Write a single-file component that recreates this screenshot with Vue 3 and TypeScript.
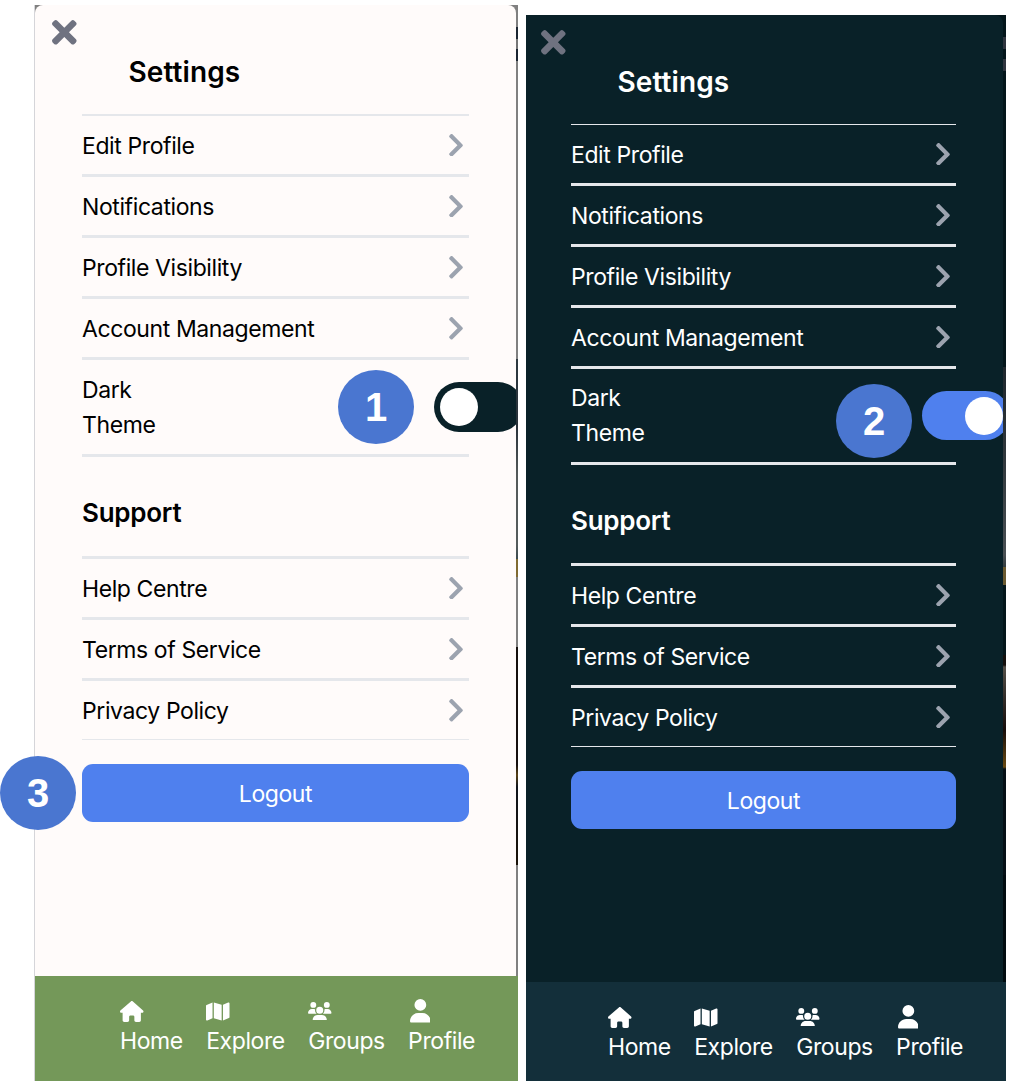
<script setup lang="ts">
interface Screen {
  theme: 'light' | 'dark'
  dark: boolean
}

interface NavItem {
  label: string
  box: string
  path: string
  w: number
  h: number
}

const screens: Screen[] = [
  { theme: 'light', dark: false },
  { theme: 'dark', dark: true },
]

const settings: string[] = ['Edit Profile', 'Notifications', 'Profile Visibility', 'Account Management']
const support: string[] = ['Help Centre', 'Terms of Service', 'Privacy Policy']

const closePath =
  'M242.72 256l100.07-100.07c12.28-12.28 12.28-32.19 0-44.48l-22.24-22.24c-12.28-12.28-32.19-12.28-44.48 0L176 189.28 75.93 89.21c-12.28-12.28-32.19-12.28-44.48 0L9.21 111.45c-12.28 12.28-12.28 32.19 0 44.48L109.28 256 9.21 356.07c-12.28 12.28-12.28 32.19 0 44.48l22.24 22.24c12.28 12.28 32.2 12.28 44.48 0L176 322.72l100.07 100.07c12.28 12.28 32.2 12.28 44.48 0l22.24-22.24c12.28-12.28 12.28-32.19 0-44.48L242.72 256z'
const chevronPath =
  'M285.476 272.971L91.132 467.314c-9.373 9.373-24.569 9.373-33.941 0l-22.667-22.667c-9.357-9.357-9.375-24.522-.04-33.901L188.505 256 34.484 101.255c-9.335-9.379-9.317-24.544.04-33.901l22.667-22.667c9.373-9.373 24.569-9.373 33.941 0L285.475 239.03c9.373 9.372 9.373 24.568.001 33.941z'

const nav: NavItem[] = [
  {
    label: 'Home',
    box: '0 0 576 512',
    w: 23.5,
    h: 21,
    path: 'M575.8 255.5c0 18-15 32.1-32 32.1h-32l.7 160.2c0 2.7-.2 5.4-.5 8.1V472c0 22.1-17.9 40-40 40H456c-1.1 0-2.2 0-3.3-.1c-1.4 .1-2.8 .1-4.2 .1H416 392c-22.1 0-40-17.9-40-40V448 384c0-17.7-14.3-32-32-32H256c-17.7 0-32 14.3-32 32v64 24c0 22.1-17.9 40-40 40H160 128.1c-1.5 0-3-.1-4.5-.2c-1.2 .1-2.4 .2-3.6 .2H104c-22.1 0-40-17.9-40-40V360c0-.9 0-1.9 .1-2.8V287.6H32c-18 0-32-14-32-32.1c0-9 3-17 10-24L266.4 8c7-7 15-8 22-8s15 2 21 7L564.8 231.5c8 7 12 15 11 24z',
  },
  {
    label: 'Explore',
    box: '0 0 576 512',
    w: 23.5,
    h: 21,
    path: 'M384 476.1L192 421.2V35.9L384 90.8V476.1zm32-1.2V88.4L543.1 37.5c15.8-6.3 32.9 5.3 32.9 22.3V394.6c0 9.8-6 18.6-15.1 22.3L416 474.9zM15.1 95.1L160 37.2V423.6L32.9 474.5C17.1 480.8 0 469.2 0 452.2V117.4c0-9.8 6-18.6 15.1-22.3z',
  },
  {
    label: 'Groups',
    box: '0 0 640 512',
    w: 23.5,
    h: 18.8,
    path: 'M144 0a80 80 0 1 1 0 160A80 80 0 1 1 144 0zM512 0a80 80 0 1 1 0 160A80 80 0 1 1 512 0zM0 298.7C0 239.8 47.8 192 106.7 192h42.7c15.9 0 31 3.5 44.6 9.7c-1.3 7.2-1.9 14.7-1.9 22.3c0 38.2 16.8 72.5 43.3 96c-.2 0-.4 0-.7 0H21.3C9.6 320 0 310.4 0 298.7zM405.3 320c-.2 0-.4 0-.7 0c26.6-23.5 43.3-57.8 43.3-96c0-7.6-.7-15-1.9-22.3c13.6-6.3 28.7-9.7 44.6-9.7h42.7C592.2 192 640 239.8 640 298.7c0 11.8-9.6 21.3-21.3 21.3H405.3zM224 224a96 96 0 1 1 192 0 96 96 0 1 1 -192 0zM128 485.3C128 411.7 187.7 352 261.3 352H378.7C452.3 352 512 411.7 512 485.3c0 14.7-11.9 26.7-26.7 26.7H154.7c-14.7 0-26.7-11.9-26.7-26.7z',
  },
  {
    label: 'Profile',
    box: '0 0 448 512',
    w: 20.7,
    h: 23.6,
    path: 'M224 256A128 128 0 1 0 224 0a128 128 0 1 0 0 256zm-45.7 48C79.8 304 0 383.8 0 482.3C0 498.7 13.3 512 29.7 512H418.3c16.4 0 29.7-13.3 29.7-29.7C448 383.8 368.2 304 269.7 304H178.3z',
  },
]
</script>

<template>
  <main class="board">
    <section v-for="s in screens" :key="s.theme" class="phone" :class="s.theme">
      <div class="panel">
        <header class="head">
          <svg class="close" viewBox="0 80 352 352"><path :d="closePath" /></svg>
          <h1 class="title">Settings</h1>
        </header>
        <ul class="list">
          <li v-for="item in settings" :key="item" class="row">
            <span class="label">{{ item }}</span>
            <svg class="chevron" viewBox="27 37.6 266 436.8"><path :d="chevronPath" /></svg>
          </li>
          <li class="row theme-row">
            <span class="label two-line">Dark<br />Theme</span>
            <span class="toggle" :class="{ on: s.dark }"><i class="knob"></i></span>
          </li>
        </ul>
        <h2 class="subtitle">Support</h2>
        <ul class="list help">
          <li v-for="item in support" :key="item" class="row">
            <span class="label">{{ item }}</span>
            <svg class="chevron" viewBox="27 37.6 266 436.8"><path :d="chevronPath" /></svg>
          </li>
        </ul>
        <button class="logout">Logout</button>
      </div>
      <nav class="nav">
        <a v-for="n in nav" :key="n.label" class="tab">
          <span class="glyph">
            <svg :class="n.label.toLowerCase()" :viewBox="n.box" :width="n.w" :height="n.h"><path :d="n.path" /></svg>
          </span>
          <span>{{ n.label }}</span>
        </a>
      </nav>
    </section>
    <span class="badge one">1</span>
    <span class="badge two">2</span>
    <span class="badge three">3</span>
  </main>
</template>

<style>
body {
  margin: 0;
  background: #fff;
}
</style>

<style scoped>
* {
  box-sizing: border-box;
}
.board {
  position: relative;
  display: flex;
  align-items: flex-start;
  gap: 8px;
  width: 1014px;
  height: 1084px;
  padding-left: 34px;
  overflow: hidden;
  font-family: Inter, 'Liberation Sans', sans-serif;
  font-size: 23px;
  letter-spacing: -0.4px;
}
.phone {
  display: flex;
  flex-direction: column;
  overflow: hidden;
}
.light {
  --rule: #e5e7eb;
  --row: 61.1px;
  --ink: #000;
  width: 484px;
  height: 1076px;
  margin-top: 5px;
  border-left: 1px solid #d5d5d9;
  background: linear-gradient(
    #808080 0 22px, #1b2531 22px 34px, #777 34px 44px, #1b2531 44px 56px, #808080 56px 354px,
    #2e3940 354px, #28323a 420px, #555a5a 470px, #555c5c 540px, #3c4a4e 554px, #806b32 554px 572px,
    #808080 572px 642px, #15100d 642px, #16100f 760px, #5a4317 770px, #10151c 782px, #1b1308 860px, #808080 860px
  );
}
.dark {
  --rule: #e5e7eb;
  --row: 61px;
  --ink: #fff;
  width: 480px;
  height: 1066px;
  margin-top: 15px;
  background: linear-gradient(
    #04161b 0 22px, #30353f 22px 34px, #04161b 34px 44px, #30353f 44px 56px, #04161b 56px 352px,
    #1f272d 352px, #30373c 440px, #4a5054 540px, #333c40 552px, #6b5a30 552px 570px, #04161b 570px 640px,
    #15100d 640px 650px, #555049 652px, #35302c 680px, #170d0a 715px, #694a12 752px, #061016 754px 860px, #020c10 860px
  );
}
.panel {
  flex: 1;
  overflow: hidden;
  background: #fffbfa;
  color: var(--ink);
}
.light .panel {
  width: 481px;
  padding: 0 47px;
  border-radius: 8px 8px 0 0;
}
.dark .panel {
  width: 477px;
  padding: 0 47px 0 45px;
  border-radius: 0 8px 0 0;
  background: #092128;
}
.head {
  height: 109px;
  padding-top: 15px;
}
.close {
  display: block;
  width: 24.6px;
  height: 24.6px;
  margin-left: -30px;
  fill: #6f7280;
}
.title {
  margin: 6px 0 0 46.5px;
  font-size: 28px;
  font-weight: 600;
  line-height: 42px;
  letter-spacing: 0.1px;
}
.list {
  margin: 0;
  padding: 0;
  list-style: none;
}
.row {
  display: flex;
  align-items: center;
  justify-content: space-between;
  height: var(--row);
  border-bottom: 3px solid var(--rule);
}
.row:first-child {
  height: calc(var(--row) + 2px);
  border-top: 2px solid var(--rule);
}
.dark .row:first-child {
  height: calc(var(--row) + 1px);
  border-top-width: 1px;
}
.label {
  padding-top: 1.5px;
}
.chevron {
  width: 14px;
  height: 22.6px;
  margin-right: 6px;
  fill: #9ca3af;
}
.row.theme-row {
  height: 96.4px;
}
.two-line {
  line-height: 35px;
}
.toggle {
  flex: none;
  width: 89px;
  height: 50px;
  margin-right: -54px;
  padding: 6px;
  border-radius: 25px;
  background: #092128;
}
.toggle.on {
  width: 88px;
  height: 49px;
  padding: 5.5px 7px 5.5px 43px;
  background: #4f80ee;
}
.dark .row.theme-row {
  height: 96px;
}
.knob {
  display: block;
  width: 38px;
  height: 38px;
  border-radius: 50%;
  background: #fff;
}
.subtitle {
  height: 99px;
  margin: 0;
  padding-top: 12px;
  font-size: 26px;
  font-weight: 600;
  line-height: 88px;
  letter-spacing: -0.25px;
}
.dark .subtitle {
  height: 98px;
}
.help .row:first-child,
.dark .help .row:first-child {
  height: calc(var(--row) + 3px);
  border-top-width: 3px;
}
.help .row:last-child {
  height: 59.5px;
  border-bottom-width: 1px;
}
.dark .help .row:last-child {
  height: 59px;
}
.logout {
  display: block;
  width: 100%;
  height: 58px;
  margin-top: 24px;
  padding: 2px 0 0;
  border: 0;
  border-radius: 11px;
  background: #4f80ee;
  color: #fff;
  font: inherit;
  letter-spacing: inherit;
}
.nav {
  display: flex;
  flex: none;
  gap: 23.3px;
  height: 105px;
  padding: 22px 0 0 85px;
  background: #749859;
  color: #fff;
}
.dark .nav {
  height: 99px;
  padding: 22px 0 0 82px;
  background: #132f3a;
}
.tab {
  display: block;
  line-height: 34px;
}
.glyph {
  display: flex;
  align-items: center;
  height: 26px;
}
.tab svg {
  fill: #fff;
}
.tab .profile {
  margin-left: 1.5px;
}
.badge {
  position: absolute;
  width: 76px;
  height: 74px;
  border-radius: 50%;
  background: #4a76d0;
  color: #fff;
  font: bold 40px/75px 'Liberation Sans', sans-serif;
  letter-spacing: 0;
  text-align: center;
}
.one {
  left: 338px;
  top: 370px;
}
.two {
  left: 836px;
  top: 384px;
}
.three {
  left: 0;
  top: 755.5px;
}
</style>
